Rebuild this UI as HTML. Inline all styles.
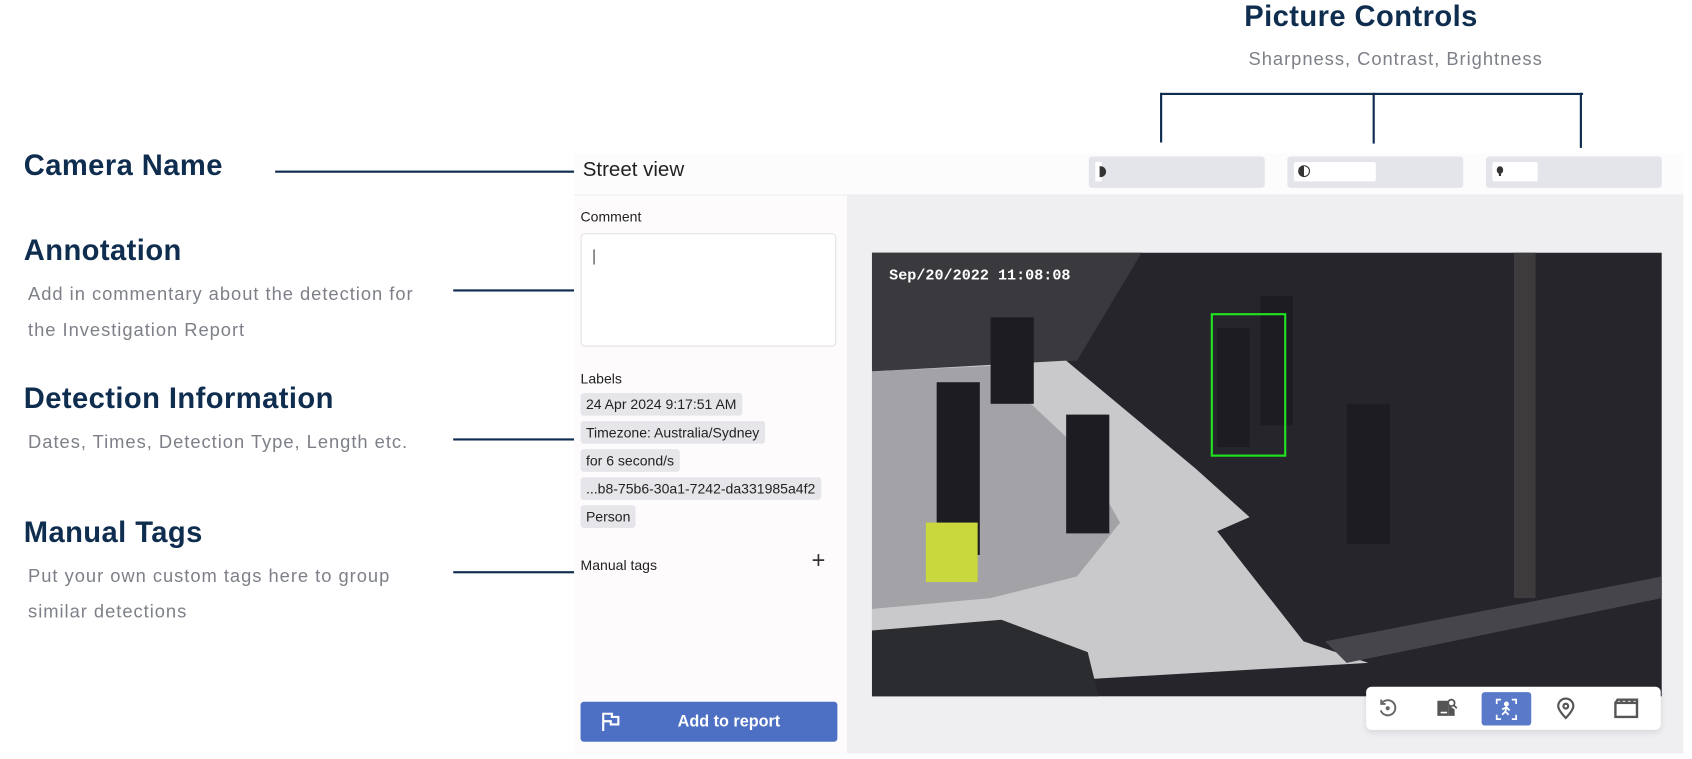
<!DOCTYPE html>
<html><head><meta charset="utf-8"><style>
html,body{margin:0;padding:0;background:#fff;overflow:hidden}
#w{width:1568px;height:703px;position:relative;transform:scale(1.0791,1.0797);transform-origin:0 0;font-family:"Liberation Sans",sans-serif}
.a{position:absolute}
.h{color:#0f2d4f;font-weight:bold;font-size:27px;letter-spacing:0.4px}
.s{color:#7d8088;font-size:17px;line-height:33px;letter-spacing:0.9px}
.ln{position:absolute;background:#0f2d4f;height:2px}
.vl{position:absolute;background:#0f2d4f;width:2px}
.lab{position:absolute;left:538px;background:#e6e6ea;border-radius:3px;font-size:13px;color:#222;padding:0 5px;height:21px;line-height:21px}
.bar{position:absolute;top:145px;width:163px;height:29px;background:#e4e5ea;border-radius:3px}
</style></head><body><div id="w">
<div class="a h" style="left:1153px;top:0px">Picture Controls</div>
<div class="a s" style="left:1157px;top:38px">Sharpness, Contrast, Brightness</div>
<div class="ln" style="left:1075px;top:86px;width:392px"></div>
<div class="vl" style="left:1075px;top:86px;height:46px"></div>
<div class="vl" style="left:1272px;top:86px;height:47px"></div>
<div class="vl" style="left:1464px;top:86px;height:51px"></div>

<div class="a h" style="left:22px;top:138px">Camera Name</div>
<div class="ln" style="left:255px;top:158px;width:277px"></div>
<div class="a h" style="left:22px;top:217px">Annotation</div>
<div class="a s" style="left:26px;top:256px">Add in commentary about the detection for<br>the Investigation Report</div>
<div class="ln" style="left:420px;top:268px;width:112px"></div>
<div class="a h" style="left:22px;top:354px">Detection Information</div>
<div class="a s" style="left:26px;top:393px">Dates, Times, Detection Type, Length etc.</div>
<div class="ln" style="left:420px;top:406px;width:112px"></div>
<div class="a h" style="left:22px;top:478px">Manual Tags</div>
<div class="a s" style="left:26px;top:517px">Put your own custom tags here to group<br>similar detections</div>
<div class="ln" style="left:420px;top:529px;width:112px"></div>

<div class="a" style="left:532px;top:142px;width:1028px;height:38px;background:#fdfcfd"></div>
<div class="a" style="left:540px;top:147px;font-size:19px;color:#222">Street view</div>
<div class="bar" style="left:1009px"><div class="a" style="left:6px;top:5px;width:6px;height:18px;background:#fff"></div><div class="a" style="left:10px;top:9px;width:6px;height:10px;border-radius:0 6px 6px 0;background:#333"></div></div>
<div class="bar" style="left:1193px"><div class="a" style="left:6px;top:5px;width:76px;height:18px;background:#fff;border-radius:2px"></div><div class="a" style="left:10px;top:8px;width:9px;height:9px;border:1.5px solid #333;border-radius:50%;background:linear-gradient(90deg,#333 50%,#fff 50%)"></div></div>
<div class="bar" style="left:1377px"><div class="a" style="left:6px;top:5px;width:42px;height:18px;background:#fff;border-radius:2px"></div><div class="a" style="left:10px;top:9px;width:6px;height:7px;border-radius:50%;background:#333"></div><div class="a" style="left:12px;top:15px;width:2px;height:3px;background:#333"></div></div>
<div class="a" style="left:532px;top:180px;width:253px;height:518px;background:#fdfbfc;border-top:1px solid #eee"></div>
<div class="a" style="left:785px;top:180px;width:775px;height:518px;background:#efeff2"></div>
<div class="a" style="left:538px;top:193px;font-size:13px;color:#222">Comment</div>
<div class="a" style="left:538px;top:216px;width:235px;height:103px;border:1px solid #e2e2e6;border-radius:4px;background:#fff"><div class="a" style="left:11px;top:14px;width:1px;height:14px;background:#333"></div></div>
<div class="a" style="left:538px;top:343px;font-size:13px;color:#222">Labels</div>
<div class="lab" style="top:364px">24 Apr 2024 9:17:51 AM</div>
<div class="lab" style="top:390px">Timezone: Australia/Sydney</div>
<div class="lab" style="top:416px">for 6 second/s</div>
<div class="lab" style="top:442px">...b8-75b6-30a1-7242-da331985a4f2</div>
<div class="lab" style="top:468px">Person</div>
<div class="a" style="left:538px;top:516px;font-size:13px;color:#222">Manual tags</div>
<div class="a" style="left:752px;top:506px;font-size:22px;color:#333;font-weight:300">+</div>
<div class="a" style="left:538px;top:650px;width:238px;height:37px;background:#4d70c4;border-radius:3px;color:#fff;font-weight:bold;font-size:15px;line-height:37px"><span style="position:absolute;left:90px">Add to report</span>
<svg class="a" style="left:19px;top:10px" width="18" height="18" viewBox="0 0 18 18" fill="none" stroke="#fff" stroke-width="2"><path d="M2 17V1h8v3h6v7H9V8H2"/></svg></div>

<svg class="a" style="left:808px;top:234px" width="732" height="411" viewBox="0 0 732 411">
<rect width="732" height="411" fill="#26252b"/>
<polygon points="0,0 250,0 190,100 0,110" fill="#3a393e"/>
<polygon points="0,110 180,100 300,200 350,245 320,258 400,360 460,380 200,395 0,400" fill="#c9c8cb"/>
<polygon points="0,110 110,105 190,180 230,250 190,300 110,320 0,330" fill="#a3a2a6"/>
<polygon points="0,350 120,340 200,370 210,411 0,411" fill="#2b2c30"/>
<polygon points="420,360 732,300 732,320 440,380" fill="#45454b"/>
<rect x="595" y="0" width="20" height="320" fill="#3d3b3c"/>
<g fill="#1c1c22"><rect x="320" y="70" width="30" height="110"/><rect x="60" y="120" width="40" height="160"/><rect x="180" y="150" width="40" height="110"/><rect x="440" y="140" width="40" height="130"/><rect x="360" y="40" width="30" height="120"/><rect x="110" y="60" width="40" height="80"/></g>
<rect x="50" y="250" width="48" height="55" fill="#c9d83c"/>
<rect x="315" y="57" width="68" height="131" fill="none" stroke="#22e022" stroke-width="2"/>
<text x="16" y="25" fill="#fff" font-family="Liberation Mono,monospace" font-weight="bold" font-size="14">Sep/20/2022 11:08:08</text>
</svg>

<div class="a" style="left:1266px;top:636px;width:273px;height:40px;background:#fff;border-radius:5px;box-shadow:0 2px 6px rgba(0,0,0,.1)">
<svg class="a" style="left:10px;top:10px" width="20" height="20" viewBox="0 0 20 20" fill="none" stroke="#666" stroke-width="1.8"><path d="M4 6A7 7 0 1 1 3.5 12M4 2v4h4"/><circle cx="10" cy="10" r="1" fill="#666"/></svg>
<svg class="a" style="left:64px;top:9px" width="22" height="22" viewBox="0 0 22 22"><path d="M2 4h10l0 14H2z" fill="#555"/><path d="M12 8v10h6v-6" fill="#555"/><circle cx="15" cy="6" r="3" fill="none" stroke="#555" stroke-width="1.6"/><path d="M17 8l3 3" stroke="#555" stroke-width="1.6"/><path d="M5 15h6" stroke="#fff" stroke-width="1.5"/></svg>
<div class="a" style="left:107px;top:5px;width:46px;height:31px;background:#5a7ac9;border-radius:3px"><svg class="a" style="left:12px;top:5px" width="22" height="22" viewBox="0 0 22 22" fill="none" stroke="#fff" stroke-width="1.6"><path d="M2 6V2h4M16 2h4v4M20 16v4h-4M6 20H2v-4"/><circle cx="11" cy="6" r="1.5" fill="#fff"/><path d="M7 11l4-2 3 3M11 9l-1 4-3 3M10 13l3 3"/></svg></div>
<svg class="a" style="left:175px;top:9px" width="20" height="22" viewBox="0 0 20 22" fill="none" stroke="#555" stroke-width="2"><path d="M10 20s-7-7-7-11a7 7 0 0 1 14 0c0 4-7 11-7 11z"/><circle cx="10" cy="9" r="2.2"/></svg>
<svg class="a" style="left:229px;top:10px" width="24" height="20" viewBox="0 0 24 20" fill="none" stroke="#555" stroke-width="2.2"><rect x="2" y="5" width="20" height="13"/><path d="M2 5l2-3h18v3M8 2l-1 3M13 2l-1 3M18 2l-1 3"/></svg>
</div>
</div></body></html>
